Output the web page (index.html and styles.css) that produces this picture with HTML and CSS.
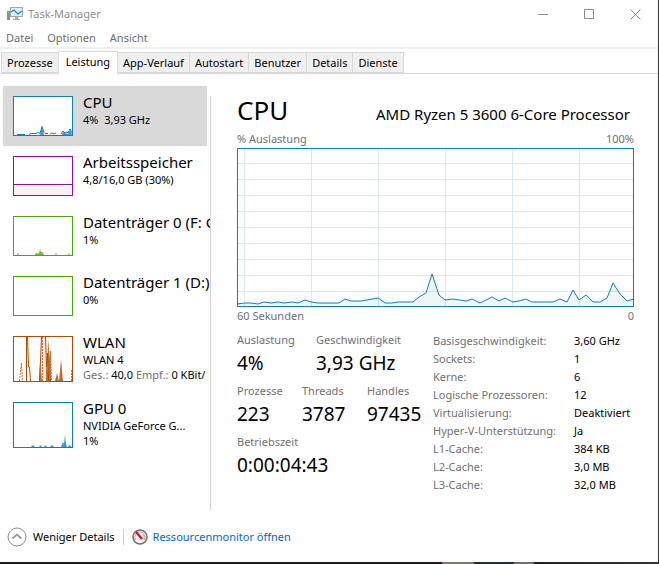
FILE: index.html
```html
<!DOCTYPE html>
<html lang="de">
<head>
    <meta charset="UTF-8">
    <meta name="viewport" content="width=device-width, initial-scale=1.0">
    <title>Task-Manager</title>
    <link rel="stylesheet" href="styles.css">
</head>
<body>
    <div class="window">
        <header class="titlebar">
            <svg class="app-icon" width="16" height="14" viewBox="0 0 16 14" aria-hidden="true">
                <rect x="0" y="4" width="3" height="9" fill="#8d8d8d"/>
                <rect x="1" y="5" width="1" height="2" fill="#6fd36f"/>
                <rect x="3" y="0" width="13" height="10" fill="#a2a8ab"/>
                <rect x="4" y="1" width="11" height="8" fill="#d9f1fb"/>
                <path d="M4 5 L7 3 L11 7 L15 4" fill="none" stroke="#2488b8" stroke-width="1.3"/>
                <path d="M8 10h3v2h2v1H6v-1h2z" fill="#a2a8ab"/>
            </svg>
            <span class="title">Task-Manager</span>
            <div class="window-controls">
                <button type="button" aria-label="Minimieren">
                    <svg width="11" height="11" viewBox="0 0 11 11"><path d="M0 5.5h10"/></svg>
                </button>
                <button type="button" aria-label="Maximieren">
                    <svg width="11" height="11" viewBox="0 0 11 11"><path d="M.5 .5h9v9h-9z"/></svg>
                </button>
                <button type="button" aria-label="Schließen">
                    <svg width="11" height="11" viewBox="0 0 11 11"><path d="M.5 .5l10 10M10.5 .5l-10 10"/></svg>
                </button>
            </div>
        </header>

        <nav class="menubar">
            <button type="button">Datei</button>
            <button type="button">Optionen</button>
            <button type="button">Ansicht</button>
        </nav>

        <div class="tabs" role="tablist">
            <button type="button" role="tab">Prozesse</button>
            <button type="button" role="tab" class="active" aria-selected="true">Leistung</button>
            <button type="button" role="tab">App-Verlauf</button>
            <button type="button" role="tab">Autostart</button>
            <button type="button" role="tab">Benutzer</button>
            <button type="button" role="tab">Details</button>
            <button type="button" role="tab">Dienste</button>
        </div>

        <div class="content">
            <aside class="sidebar">
                <button type="button" class="resource cpu selected">
                    <svg class="thumb" viewBox="0 0 58 38">
                        <path class="line" d="M3 37.500h8M15 37.500l2-1h5l2-1 2 1 2-7 2 6 1 1h3M36 37l2-1 2 1 2-1M47 37l2-3 2 2 2-1 1 1 2-4 2 4"/>
                        <path class="solid" d="M26 38l2-8 2 8zM48 38l1-3 2 1 3 1 2-4 2 5z"/>
                    </svg>
                    <span class="info">
                        <span class="name">CPU</span>
                        <span class="value">4%&nbsp; 3,93 GHz</span>
                    </span>
                </button>
                <button type="button" class="resource memory">
                    <svg class="thumb" viewBox="0 0 58 38">
                        <path class="usage" d="M-1 27.5h60V39H-1z"/>
                    </svg>
                    <span class="info">
                        <span class="name">Arbeitsspeicher</span>
                        <span class="value">4,8/16,0 GB (30%)</span>
                    </span>
                </button>
                <button type="button" class="resource disk">
                    <svg class="thumb" viewBox="0 0 58 38">
                        <path class="solid" d="M3 38l1-2 1 2zM21 38l1-3 1 2 2-1 1-4 1 3 1 0 1 1 1 2zM41 38l1-2 1 2zM54 38l1-2 1 2z"/>
                    </svg>
                    <span class="info">
                        <span class="name">Datenträger 0 (F: G</span>
                        <span class="value">1%</span>
                    </span>
                </button>
                <button type="button" class="resource disk">
                    <svg class="thumb" viewBox="0 0 58 38"></svg>
                    <span class="info">
                        <span class="name">Datenträger 1 (D:)</span>
                        <span class="value">0%</span>
                    </span>
                </button>
                <button type="button" class="resource wlan tall">
                    <svg class="thumb" viewBox="0 0 58 44">
                        <path class="soft" d="M27 44V0h5l2 44z"/>
                        <path class="dotted" d="M5.500 44l1-10 1-8 1 18M36.500 44l0-30 1 30M57.500 44v-11M28.500 44V0"/>
                        <path class="line" d="M12.500 44V0M13.500 0l1 30h1l1 14M25.500 44l1-20 1-24M31.500 0l1 30 1-14 1 28"/>
                        <path class="solid" d="M25 44l1-18 2 18zM32 44l0-22 2 22zM33 44l1-42 2 20 1 22zM41 44l2-8 2 8zM45 44l2-22 2 22z"/>
                    </svg>
                    <span class="info">
                        <span class="name">WLAN</span>
                        <span class="value">WLAN 4</span>
                        <span class="value"><span class="muted">Ges.:</span> 40,0 <span class="muted">Empf.:</span> 0 KBit/</span>
                    </span>
                </button>
                <button type="button" class="resource cpu tall">
                    <svg class="thumb" viewBox="0 0 58 44">
                        <path class="solid" d="M17 44l1-1.500h2l1 1.500zM25 44l1-1.500h1l1 1.500zM30 44l1-1.500h1l1 1.500zM36 44l1-1.500h2l1 1.500zM47 44l2-5 1 2 1-9 1 9 1 3zM54 44l1-2 3 2z"/>
                    </svg>
                    <span class="info">
                        <span class="name">GPU 0</span>
                        <span class="value">NVIDIA GeForce G...</span>
                        <span class="value">1%</span>
                    </span>
                </button>
            </aside>

            <div class="divider"></div>

            <main class="details">
                <div class="heading">
                    <h1>CPU</h1>
                    <h2>AMD Ryzen 5 3600 6-Core Processor</h2>
                </div>
                <div class="axis">
                    <span>% Auslastung</span>
                    <span>100%</span>
                </div>
                <svg class="chart" viewBox="0 0 395 157" preserveAspectRatio="none" role="img" aria-label="CPU-Auslastung">
                    <path class="grid" d="M0 14.500h395M0 30.500h395M0 46.500h395M0 62.500h395M0 78.500h395M0 94.500h395M0 110.500h395M0 126.500h395M0 142.500h395M6.500 0v157M73.500 0v157M140.500 0v157M207.500 0v157M274.500 0v157M341.500 0v157"/>
                    <path class="area" d="M-1 158V155L7 154H13L20 155L26 153L33 154L40 153L46 154L54 153L60 154L67 151L73 153L80 154H101L107 150L113 152H123L140 149L147 154H154L160 153H175L181 148L188 144L194 125L201 146L207 151L215 150L228 152L234 150L242 154L254 148L261 152L267 149L275 153L281 152L288 150L294 153H315L322 150L329 153L335 141L341 151L348 146L355 153H362L369 149L375 134L382 145L389 152L396 150V158z"/>
                </svg>
                <div class="axis bottom">
                    <span>60 Sekunden</span>
                    <span>0</span>
                </div>

                <div class="figures">
                    <div class="stats">
                        <dl>
                            <div class="wide"><dt>Auslastung</dt><dd>4%</dd></div>
                            <div><dt>Geschwindigkeit</dt><dd>3,93 GHz</dd></div>
                        </dl>
                        <dl>
                            <div><dt>Prozesse</dt><dd>223</dd></div>
                            <div><dt>Threads</dt><dd>3787</dd></div>
                            <div><dt>Handles</dt><dd>97435</dd></div>
                        </dl>
                        <dl>
                            <div><dt>Betriebszeit</dt><dd>0:00:04:43</dd></div>
                        </dl>
                    </div>
                    <table class="specs">
                        <tr><th scope="row">Basisgeschwindigkeit:</th><td>3,60 GHz</td></tr>
                        <tr><th scope="row">Sockets:</th><td>1</td></tr>
                        <tr><th scope="row">Kerne:</th><td>6</td></tr>
                        <tr><th scope="row">Logische Prozessoren:</th><td>12</td></tr>
                        <tr><th scope="row">Virtualisierung:</th><td>Deaktiviert</td></tr>
                        <tr><th scope="row">Hyper-V-Unterstützung:</th><td>Ja</td></tr>
                        <tr><th scope="row">L1-Cache:</th><td>384 KB</td></tr>
                        <tr><th scope="row">L2-Cache:</th><td>3,0 MB</td></tr>
                        <tr><th scope="row">L3-Cache:</th><td>32,0 MB</td></tr>
                    </table>
                </div>
            </main>
        </div>

        <footer class="footer">
            <button type="button" class="less">
                <svg width="20" height="20" viewBox="0 0 20 20" fill="none">
                    <circle cx="10" cy="10" r="9" stroke="#8a8a8a"/>
                    <path d="M5.500 11.500L10 7.500l4.500 4" stroke="#a0a0a0" stroke-width="2"/>
                </svg>
                Weniger Details
            </button>
            <a href="#" class="monitor">
                <svg width="16" height="16" viewBox="0 0 16 16" fill="none">
                    <circle cx="8" cy="8" r="7" fill="#f4f2ee" stroke="#77736f" stroke-width="1.600"/>
                    <path d="M4 11a5 5 0 1 1 8 0" stroke="#b5aaa0"/>
                    <path d="M11 5.500a4 4 0 0 1 .5 5" stroke="#e0a060"/>
                    <path d="M4 3l6 7" stroke="#d8101c" stroke-width="2.200"/>
                </svg>
                Ressourcenmonitor öffnen
            </a>
        </footer>
    </div>
</body>
</html>
```

FILE: styles.css
```css
* {
    margin: 0;
    padding: 0;
    box-sizing: border-box;
}

body {
    min-height: 100vh;
    padding: 0 1px 2px 0;
    background: linear-gradient(90deg, #1c1c1c 67%, #8a7068 67%, #8a7068 72%, #252c38 72%, #252c38 78%, #7c6a58 78%, #7c6a58 81%, #222 81%, #333 100%);
    font-family: 'Segoe UI', 'Noto Sans', 'Open Sans', sans-serif;
    font-size: 11px;
    line-height: 16px;
    color: #000;
}

button {
    border: none;
    background: none;
    font: inherit;
    color: inherit;
}

.window {
    display: flex;
    flex-direction: column;
    min-height: calc(100vh - 2px);
    background: #fff;
}

.titlebar {
    display: flex;
    align-items: center;
    height: 28px;
    padding-left: 7px;
    color: #8f8f8f;
}

.title {
    margin-left: 5px;
}

.window-controls {
    display: flex;
    margin-left: auto;
}

.window-controls button {
    display: flex;
    align-items: center;
    justify-content: center;
    width: 46px;
    height: 28px;
}

.window-controls path {
    fill: none;
    stroke: #8c8c8c;
}

.menubar {
    display: flex;
    gap: 14px;
    height: 21px;
    padding-left: 6px;
    border-bottom: 2px solid #f0f0f0;
    color: #6d6d6d;
}

.menubar button {
    height: 20px;
}

/* Tabs */
.tabs {
    display: flex;
    align-items: flex-end;
    height: 25px;
    padding-left: 1px;
    border-bottom: 1px solid #d9d9d9;
}

.tabs button {
    height: 21px;
    padding: 0 5px;
    background: #f0f0f0;
    border: 1px solid #d9d9d9;
    border-left-width: 0;
}

.tabs button:first-child {
    border-left-width: 1px;
}

.tabs .active {
    height: 23px;
    padding: 0 7px 2px;
    background: #fff;
    margin-bottom: -1px;
    border-bottom: none;
}

.content {
    display: flex;
    flex: 1;
    padding-top: 12px;
}

/* Sidebar */
.sidebar {
    width: 210px;
    padding-left: 3px;
    overflow: hidden;
}

.resource {
    display: flex;
    align-items: flex-start;
    gap: 10px;
    width: 100%;
    height: 60px;
    padding: 10px 0 0 10px;
    text-align: left;
    white-space: nowrap;
}

.resource.tall {
    height: 66px;
}

.resource.selected {
    width: calc(100% - 3px);
    background: #d9d9d9;
}

.thumb {
    flex: none;
    width: 60px;
    height: 40px;
    border: 1px solid currentColor;
    background: #fff;
    fill: currentColor;
    stroke: currentColor;
    stroke-width: 1px;
}

.tall .thumb {
    height: 46px;
}

.cpu .thumb {
    color: #117dbb;
}

.memory .thumb {
    color: #8b12ae;
}

.disk .thumb {
    color: #4da60c;
}

.wlan .thumb {
    color: #a74f01;
}

.usage {
    fill: #f4f2f4;
}

.soft {
    fill: #fbf0e8;
    stroke: none;
}

.line {
    fill: none;
}

.dotted {
    fill: none;
    stroke: #d9673a;
    stroke-dasharray: 2 1;
}

.solid {
    stroke: none;
    opacity: 0.8;
}

.info {
    display: flex;
    flex-direction: column;
    line-height: 15px;
}

.name {
    margin-top: -4px;
    font-size: 15px;
    line-height: 20px;
}

.muted {
    color: #707070;
}

.divider {
    width: 1px;
    margin: 10px 0 0;
    background: #d5d5d5;
}

/* Details */
.details {
    flex: 1;
    padding: 4px 24px 0 26px;
}

.heading {
    display: flex;
    align-items: baseline;
    justify-content: space-between;
    height: 41px;
    padding-right: 4px;
}

h1 {
    font-size: 26px;
    font-weight: 400;
    line-height: 40px;
}

h2 {
    font-size: 15px;
    font-weight: 400;
    line-height: 20px;
}

.axis {
    display: flex;
    justify-content: space-between;
    height: 17px;
    color: #707070;
}

.axis.bottom {
    height: 25px;
    padding-top: 1px;
}

.chart {
    display: block;
    width: 100%;
    height: 159px;
    border: 1px solid #117dbb;
}

.grid {
    fill: none;
    stroke: #d9e8f1;
}

.area {
    fill: rgba(17, 125, 187, 0.07);
    stroke: #117dbb;
}

.figures {
    display: grid;
    grid-template-columns: 196px 1fr;
}

.stats dl {
    display: flex;
    height: 51px;
}

.stats dl div {
    min-width: 65px;
}

.stats dl .wide {
    min-width: 79px;
}

dt {
    color: #707070;
}

dd {
    font-size: 19px;
    line-height: 30px;
}

.specs {
    align-self: start;
    border-collapse: collapse;
    line-height: 18px;
}

.specs th {
    width: 141px;
    color: #707070;
    font-weight: 400;
    text-align: left;
}

/* Footer */
.footer {
    display: flex;
    align-items: center;
    height: 52px;
    padding: 2px 7px 0;
}

.less,
.monitor {
    display: flex;
    align-items: center;
}

.less {
    gap: 6px;
    padding-right: 8px;
}

.monitor {
    gap: 5px;
    padding-left: 8px;
    border-left: 1px solid #d0d0d0;
    color: #0066cc;
    text-decoration: none;
}
```
